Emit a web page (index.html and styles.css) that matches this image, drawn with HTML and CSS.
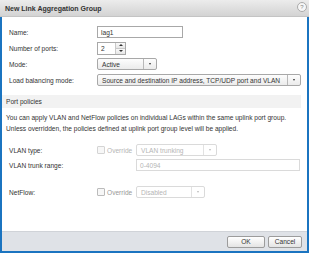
FILE: index.html
```html
<!DOCTYPE html>
<html lang="en">
<head>
    <meta charset="UTF-8">
    <title>New Link Aggregation Group</title>
    <link rel="stylesheet" href="styles.css">
</head>
<body>
    <div class="dialog">
        <div class="titlebar">
            <span class="title">New Link Aggregation Group</span>
            <span class="help">?</span>
        </div>
        <div class="frame">
            <div class="content">
                <div class="form">
                    <div class="row">
                        <span class="label">Name:</span>
                        <div class="field name">lag1</div>
                    </div>
                    <div class="row">
                        <span class="label">Number of ports:</span>
                        <div class="field spinner">
                            <span class="value">2</span>
                            <span class="steps"><span class="up"></span><span class="down"></span></span>
                        </div>
                    </div>
                    <div class="row">
                        <span class="label">Mode:</span>
                        <div class="select mode"><span class="value">Active</span><span class="arrow"></span></div>
                    </div>
                    <div class="row">
                        <span class="label">Load balancing mode:</span>
                        <div class="select balance"><span class="value">Source and destination IP address, TCP/UDP port and VLAN</span><span class="arrow"></span></div>
                    </div>
                </div>

                <div class="section">Port policies</div>
                <p class="note">You can apply VLAN and NetFlow policies on individual LAGs within the same uplink port group.<br>Unless overridden, the policies defined at uplink port group level will be applied.</p>

                <div class="policies">
                    <div class="row">
                        <span class="label">VLAN type:</span>
                        <span class="override"><span class="check"></span>Override</span>
                        <div class="select off vlan"><span class="value">VLAN trunking</span><span class="arrow"></span></div>
                    </div>
                    <div class="row">
                        <span class="label">VLAN trunk range:</span>
                        <span class="override"></span>
                        <div class="field off trunk">0-4094</div>
                    </div>
                    <div class="row netflow">
                        <span class="label">NetFlow:</span>
                        <span class="override active"><span class="check"></span>Override</span>
                        <div class="select off flow"><span class="value">Disabled</span><span class="arrow"></span></div>
                    </div>
                </div>
            </div>
            <div class="footer">
                <button class="btn ok">OK</button>
                <button class="btn cancel">Cancel</button>
            </div>
        </div>
    </div>
</body>
</html>
```

FILE: styles.css
```css
body {
    margin: 0;
    font-family: "Liberation Sans", Arial, sans-serif;
    font-size: 6.6px;
    color: #333;
    background: #fff;
}
.dialog {
    width: 309px;
    height: 253px;
    display: flex;
    flex-direction: column;
}
.titlebar {
    height: 17px;
    flex: none;
    display: flex;
    align-items: center;
    justify-content: space-between;
    padding: 0 2px 0 5px;
    background: linear-gradient(#ececec, #d3d3d3);
    border-bottom: 1px solid #c4c4c4;
    box-sizing: border-box;
}
.title {
    font-weight: bold;
    font-size: 7px;
    color: #333;
}
.help {
    width: 8px;
    height: 8px;
    border: 1px solid #aaa;
    border-radius: 50%;
    background: #f6f6f6;
    color: #888;
    font-size: 6px;
    display: flex;
    align-items: center;
    justify-content: center;
    margin-bottom: 3px;
}
.frame {
    flex: 1;
    display: flex;
    flex-direction: column;
    border: 2px solid #1b74c0;
    border-top: none;
}
.content {
    flex: 1;
    padding: 9px 6px 0 0;
}
.row {
    display: flex;
    align-items: center;
    height: 12px;
}
.form .row + .row {
    margin-top: 4px;
}
.label {
    width: 88px;
    padding-left: 7px;
    flex: none;
}
.field {
    height: 12px;
    box-sizing: border-box;
    border: 1px solid #a8a8a8;
    background: #fff;
    padding-left: 3px;
    display: flex;
    align-items: center;
}
.name {
    width: 86px;
}
.spinner {
    width: 29px;
    justify-content: space-between;
    padding: 0 0 0 3px;
    height: 13px;
}
.steps {
    width: 9px;
    height: 11px;
    display: flex;
    flex-direction: column;
    border-left: 1px solid #c8c8c8;
}
.steps span {
    flex: 1;
    display: flex;
    align-items: center;
    justify-content: center;
    background: linear-gradient(#fafafa, #e6e6e6);
}
.steps .up {
    border-bottom: 1px solid #c8c8c8;
}
.steps .up::after {
    content: "";
    border: 2px solid transparent;
    border-bottom-color: #333;
    border-top: none;
}
.steps .down::after {
    content: "";
    border: 2px solid transparent;
    border-top-color: #333;
    border-bottom: none;
}
.select {
    height: 12px;
    box-sizing: border-box;
    border: 1px solid #a8a8a8;
    border-radius: 2px;
    background: linear-gradient(#fdfdfd, #ebebeb);
    display: flex;
    align-items: center;
    justify-content: space-between;
}
.select .value {
    padding-left: 4px;
    white-space: nowrap;
}
.select .arrow {
    width: 12px;
    height: 100%;
    border-left: 1px solid #b8b8b8;
    display: flex;
    align-items: center;
    justify-content: center;
}
.select .arrow::after {
    content: "";
    border: 1.5px solid transparent;
    border-top: 2px solid #333;
    border-bottom: none;
}
.mode {
    width: 60px;
}
.balance {
    width: 204px;
}
.section {
    margin-top: 9px;
    height: 13px;
    background: #f2f2f2;
    display: flex;
    align-items: center;
    padding-left: 4px;
}
.note {
    margin: 4px 0 0;
    padding-left: 4px;
    line-height: 11px;
}
.policies {
    margin-top: 10px;
}
.policies .row + .row {
    margin-top: 3px;
}
.policies .row.netflow {
    margin-top: 15px;
}
.override {
    width: 39px;
    flex: none;
    display: flex;
    align-items: center;
    color: #b5b5b5;
}
.override.active {
    color: #999;
}
.check {
    width: 6px;
    height: 6px;
    border: 1px solid #d4d4d4;
    background: #f7f7f7;
    border-radius: 1px;
    margin-right: 2px;
}
.override.active .check {
    border-color: #bbb;
}
.off {
    border-color: #dadada;
    color: #b5b5b5;
    background: #fff;
}
.off .arrow {
    border-left-color: #e2e2e2;
}
.off .arrow::after {
    border-top-color: #bbb;
}
.vlan {
    width: 81px;
}
.trunk {
    width: 164px;
}
.flow {
    width: 69px;
}
.footer {
    height: 20px;
    flex: none;
    background: #dfe2e7;
    border-top: 1px solid #d0d3d8;
    box-sizing: border-box;
    display: flex;
    align-items: center;
    justify-content: flex-end;
    gap: 3px;
    padding-right: 5px;
}
.btn {
    height: 12px;
    padding: 0;
    font-family: inherit;
    font-size: 6.6px;
    color: #333;
    border: 1px solid #9c9c9c;
    border-radius: 2px;
    background: linear-gradient(#ffffff, #e4e4e4);
}
.ok {
    width: 38px;
}
.cancel {
    width: 34px;
}
```
